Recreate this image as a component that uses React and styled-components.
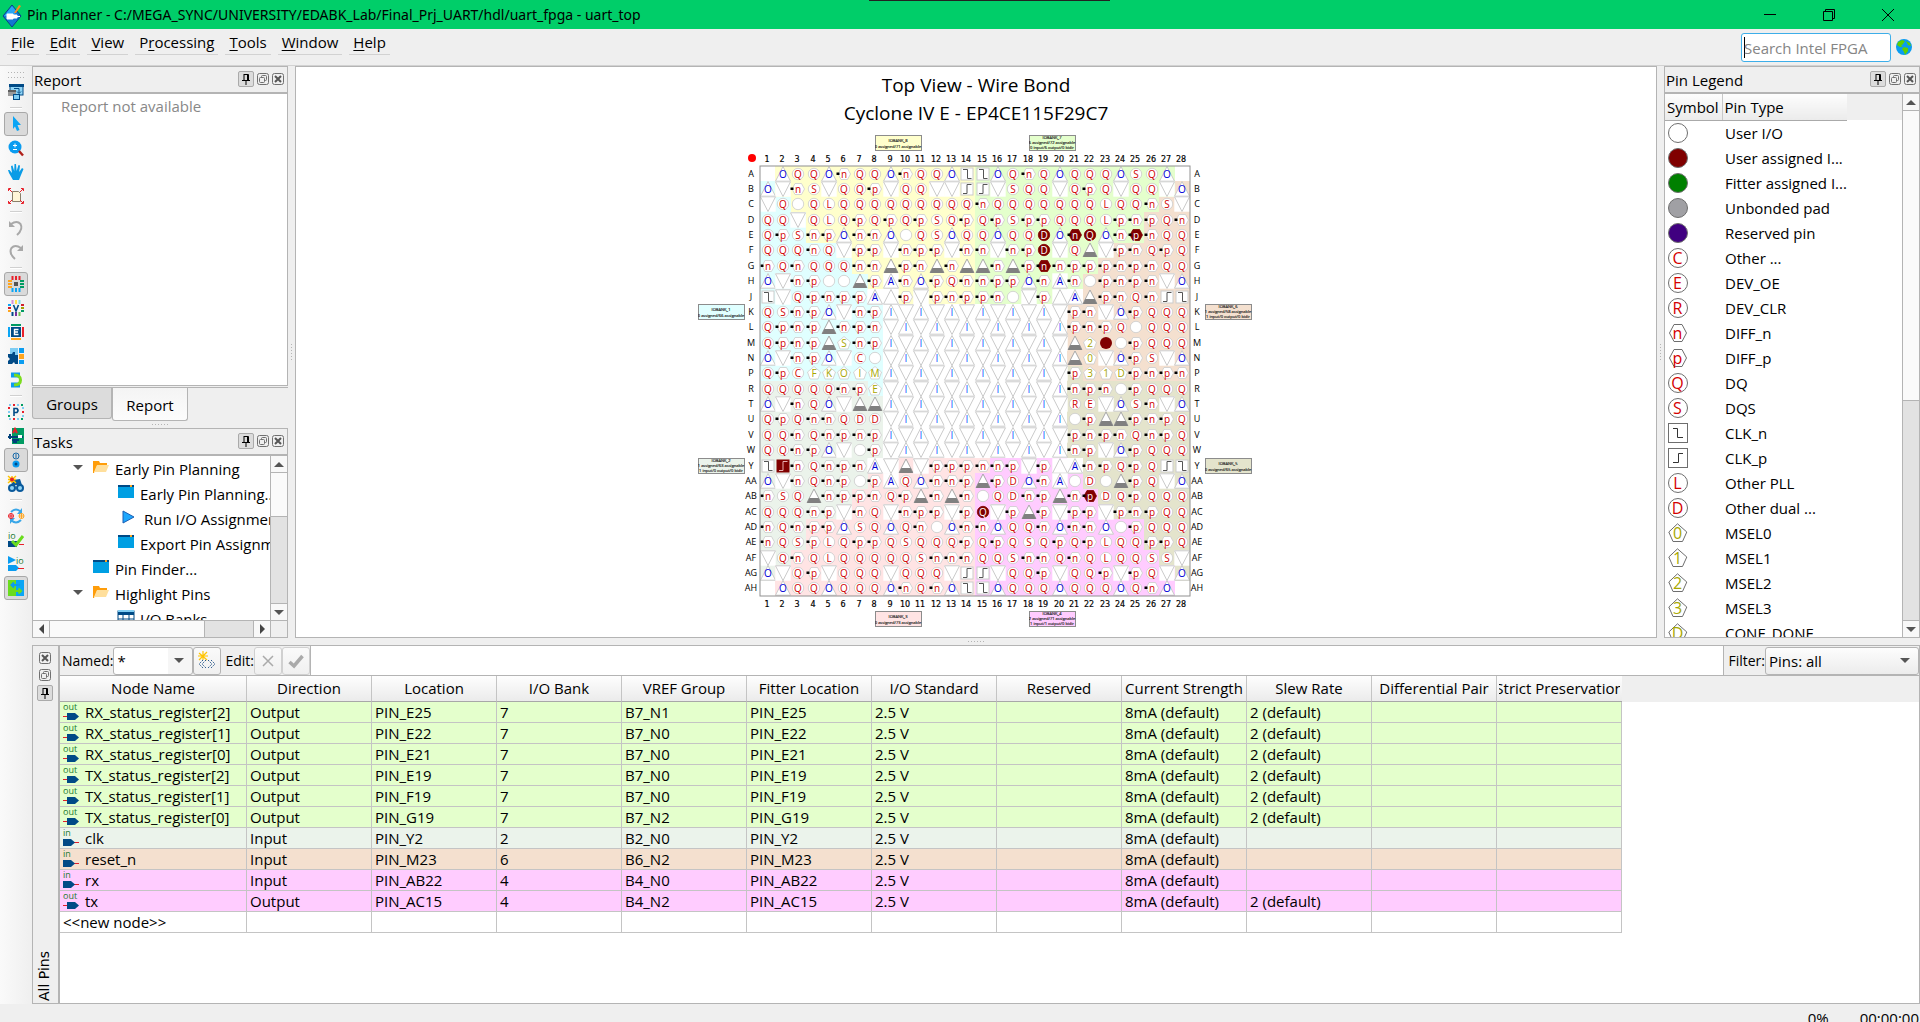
import React from "react";
import styled, { createGlobalStyle } from "styled-components";

const LINE = "#b4b4b4";
const CHROME = "#efefef";

const Global = createGlobalStyle`
  *, *::before, *::after { box-sizing: border-box; }
  body { margin: 0; overflow: hidden; }
  body, button, input, select, table {
    font-family: "Open Sans", "Noto Sans", sans-serif;
    font-size: 15px;
    line-height: 21px;
    color: #000;
  }
  ul { list-style: none; margin: 0; padding: 0; }
  button { padding: 0; border: 0; background: none; }
  svg { display: block; flex: none; }
`;

const Window = styled.div`
  display: flex;
  flex-direction: column;
  height: 100vh;
  background: ${CHROME};
  white-space: nowrap;
`;

/* ---------- title bar ---------- */
const TitleBar = styled.header`
  position: relative;
  display: flex;
  align-items: center;
  height: 29px;
  flex: none;
  padding-left: 2px;
  background: #00ce69;
`;
const TopEdge = styled.div`
  position: absolute;
  top: 0;
  left: 869px;
  width: 241px;
  height: 1px;
  background: #222;
`;
const WindowTitle = styled.h1`
  margin: 0 0 0 5px;
  flex: 1;
  font-family: "Noto Sans", sans-serif;
  font-size: 14px;
  font-weight: 400;
`;
const CaptionButton = styled.button`
  display: grid;
  place-items: center;
  width: 59px;
  height: 27px;
`;
const Captions = styled.div`
  display: flex;
  padding-right: 3px;
`;

/* ---------- menu bar ---------- */
const MenuBar = styled.nav`
  display: flex;
  justify-content: space-between;
  height: 37px;
  flex: none;
  padding: 4px 8px 0 7px;
  border-bottom: 1px solid #d2d2d2;
`;
const Menus = styled.div`
  display: flex;
  align-items: flex-start;
  gap: 7px;
`;
const MenuItem = styled.button`
  height: 22px;
  padding: 0 4px 3px;
  border-bottom: 1px solid #d2d2d2;
  line-height: 18px;
`;
const Key = styled.u`
  text-underline-offset: 2px;
`;
const SearchArea = styled.form`
  display: flex;
  align-items: flex-start;
  gap: 5px;
`;
const SearchBox = styled.input`
  width: 150px;
  height: 29px;
  padding: 1px 2px 0;
  border: 1px solid #3daee9;
  border-radius: 3px;
  background: linear-gradient(#000, #000) 2px 3px / 1px 21px no-repeat #fff;
  outline: none;
  &::placeholder { color: #858585; }
`;
const GlobeButton = styled.button`
  padding-top: 6px;
`;

/* ---------- workspace ---------- */
const Workspace = styled.div`
  display: flex;
  flex: 1;
  min-height: 0;
`;
const ToolStrip = styled.aside`
  width: 32px;
  flex: none;
  padding: 6px 4px 0;
  background: linear-gradient(90deg, #fafafa, #efefef);
`;
const dots = "linear-gradient(90deg, #b4b4b4 1px, transparent 1px)";
const Grip = styled.div`
  width: ${(p) => (p.$vertical ? 1 : 17)}px;
  height: ${(p) => (p.$vertical ? 17 : 1)}px;
  flex: none;
  background: ${(p) => (p.$vertical ? dots.replace("90deg", "180deg") : dots)} 0 0 / 3px 3px;
`;
const StripGrip = styled.div`
  display: grid;
  gap: 2px;
  justify-content: center;
  height: 8px;
`;
const ToolButton = styled.button`
  display: grid;
  place-items: center;
  width: 24px;
  height: 24px;
  border: 1px solid ${(p) => (p.$on ? "#a8a8a8" : "transparent")};
  border-radius: 3px;
  background: ${(p) => (p.$on ? "#dadada" : "none")};
`;
const ToolRule = styled.hr`
  width: 12px;
  height: 2px;
  margin: 3px auto;
  border: 0;
  border-top: 1px solid #d0d0d0;
  background: #fff;
`;
const Main = styled.main`
  display: flex;
  flex-direction: column;
  flex: 1;
  min-width: 0;
`;
const UpperRow = styled.div`
  display: flex;
  flex: 1;
  min-height: 0;
`;
const Divider = styled.div`
  display: grid;
  place-items: center;
  flex: none;
  width: ${(p) => (p.$vertical ? "7px" : "auto")};
  height: ${(p) => (p.$vertical ? "auto" : "7px")};
`;

/* ---------- docks ---------- */
const Column = styled.div`
  display: flex;
  flex-direction: column;
  width: 256px;
  flex: none;
`;
const Dock = styled.section`
  display: flex;
  flex-direction: column;
  flex: ${(p) => (p.$height ? `0 0 ${p.$height}px` : "1")};
  min-height: 0;
  border: 1px solid ${LINE};
`;
const DockHeader = styled.header`
  display: flex;
  align-items: center;
  height: 27px;
  flex: none;
  padding: 0 3px 0 1px;
  border-bottom: 2px solid ${LINE};
`;
const DockTitle = styled.h2`
  flex: 1;
  margin: 0;
  padding-top: 2px;
  font-size: 15px;
  font-weight: 400;
`;
const DockButtons = styled.div`
  display: flex;
  flex-direction: ${(p) => (p.$stacked ? "column" : "row")};
  align-items: center;
  gap: ${(p) => (p.$stacked ? 4 : 2)}px;
  padding-bottom: ${(p) => (p.$stacked ? 0 : 1)}px;
`;
const PinButton = styled.button`
  display: grid;
  place-items: center;
  width: 16px;
  height: 16px;
  border: 1px solid #aaa;
  border-radius: 2px;
  background: #dcdcdc;
`;
const SmallButton = styled.button`
  display: grid;
  place-items: center;
  width: 13px;
  height: 13px;
`;
const ReportBody = styled.div`
  flex: 1;
  padding: 2px 0 0 28px;
  background: #fff;
  color: #888;
`;
const Tabs = styled.div`
  display: flex;
  align-items: flex-start;
  height: 34px;
  flex: none;
  margin-top: 1px;
  border-top: 1px solid ${LINE};
`;
const Tab = styled.button`
  width: ${(p) => (p.$active ? 76 : 80)}px;
  height: ${(p) => (p.$active ? 33 : 31)}px;
  padding-top: ${(p) => (p.$active ? 3 : 2)}px;
  border: 1px solid ${LINE};
  border-top: 0;
  border-radius: 0 0 3px 3px;
  background: ${(p) => (p.$active ? "linear-gradient(#f4f4f4, #fcfcfc)" : "#dcdcdc")};
`;

/* ---------- scroll bars ---------- */
const ScrollView = styled.div`
  display: flex;
  flex: 1;
  min-height: 0;
  background: #fff;
`;
const ScrollContent = styled.div`
  flex: 1;
  min-width: 0;
  overflow: hidden;
`;
const ScrollTrack = styled.div`
  display: flex;
  flex-direction: ${(p) => (p.$horizontal ? "row" : "column")};
  flex: ${(p) => (p.$horizontal ? "1" : "none")};
  width: ${(p) => (p.$horizontal ? "auto" : "17px")};
  height: ${(p) => (p.$horizontal ? "17px" : "auto")};
  background: #e2e2e2;
  border: 0 solid ${LINE};
  border-width: ${(p) => (p.$horizontal ? "1px 0 0" : "0 0 0 1px")};
`;
const ScrollArrow = styled.button`
  display: grid;
  place-items: center;
  width: 16px;
  height: 16px;
  background: #f8f8f8;
`;
const ScrollThumb = styled.div`
  flex: 0 0 ${(p) => p.$size}px;
  margin-${(p) => (p.$horizontal ? "right" : "bottom")}: auto;
  border: 0 solid ${LINE};
  border-width: ${(p) => (p.$horizontal ? "0 1px" : "1px 0")};
  background: #fafafa;
`;
const ScrollEnd = styled.div`
  border: 0 solid ${LINE};
  border-width: ${(p) => (p.$horizontal ? "0 0 0 1px" : "1px 0 0")};
`;
const ScrollFoot = styled.div`
  display: flex;
  flex: none;
`;
const ScrollCorner = styled.div`
  width: 17px;
  height: 17px;
  border: 1px solid ${LINE};
  border-width: 1px 0 0 1px;
`;

/* ---------- tasks tree ---------- */
const TreeRow = styled.li`
  display: flex;
  align-items: center;
  height: 25px;
  padding-top: 1px;
  padding-left: ${(p) => p.$indent}px;
  gap: 6px;
`;
const TreeIcon = styled.span`
  display: grid;
  place-items: center;
  width: 16px;
  flex: none;
  padding-bottom: 4px;
`;
const TreeToggle = styled.button`
  width: 14px;
  padding-bottom: 4px;
`;

/* ---------- package view ---------- */
const PackagePanel = styled.section`
  display: flex;
  flex-direction: column;
  align-items: center;
  flex: 1;
  min-width: 0;
  overflow: hidden;
  padding-top: 4px;
  border: 1px solid ${LINE};
  background: #fff;
`;
const PackageTitle = styled.h2`
  margin: 0;
  font-size: 19px;
  line-height: 28px;
  font-weight: 400;
`;
const PackageDrawing = styled.svg`
  margin-top: 3px;
  text-anchor: middle;
  font-family: "Open Sans", sans-serif;
`;

/* ---------- legend ---------- */
const LegendTable = styled.table`
  width: 100%;
  table-layout: fixed;
  border-collapse: collapse;
  th {
    height: 26px;
    padding: 2px 0 0 2px;
    border-bottom: 1px solid #aaa;
    border-right: 1px solid #c8c8c8;
    background: linear-gradient(#fdfdfd, #ebebeb);
    font-weight: 400;
    text-align: left;
  }
  th + th { border-right: 0; padding-left: 2px; }
  th:last-child { border: 0; background: ${CHROME}; }
  td { height: 25px; padding: 1px 0 0 3px; overflow: hidden; }
  td:first-child { padding: 0 0 0 3px; }
`;
const LegendCol = styled.col`
  width: ${(p) => p.$width}px;
`;

/* ---------- all pins dock ---------- */
const PinsDock = styled.section`
  display: flex;
  flex: 0 0 359px;
  border: 1px solid ${LINE};
`;
const PinsSide = styled.header`
  display: flex;
  flex-direction: column;
  align-items: center;
  justify-content: space-between;
  width: 27px;
  flex: none;
  padding: 5px 2px 2px 0;
  border-right: 2px solid ${LINE};
`;
const SideTitle = styled.h2`
  margin: 0;
  font-family: "DejaVu Sans", sans-serif;
  font-size: 14px;
  font-weight: 400;
  writing-mode: vertical-rl;
  transform: rotate(180deg);
`;
const PinsMain = styled.div`
  display: flex;
  flex-direction: column;
  flex: 1;
  min-width: 0;
`;
const EditBar = styled.div`
  display: flex;
  align-items: center;
  height: 30px;
  flex: none;
  padding-left: 2px;
  border-bottom: 1px solid ${LINE};
`;
const FieldLabel = styled.label`
  padding-left: ${(p) => (p.$spaced ? 4 : 0)}px;
  font-size: 14px;
`;
const Combo = styled.span`
  display: grid;
  align-items: center;
  width: ${(p) => p.$width}px;
  > * { grid-area: 1 / 1; }
  > svg { justify-self: end; margin-right: 9px; pointer-events: none; }
`;
const Select = styled.select`
  appearance: none;
  width: 100%;
  height: 28px;
  padding: 1px 3px 0;
  border: 1px solid ${LINE};
  border-radius: 3px;
  background: ${(p) => (p.$editable ? "linear-gradient(90deg, #fff 54px, #f6f6f6 54px)" : "linear-gradient(#fdfdfd, #ececec)")};
`;
const EditButton = styled.button`
  display: grid;
  place-items: center;
  width: 28px;
  height: 28px;
  border: 1px solid ${(p) => (p.disabled ? "#d0d0d0" : LINE)};
  border-radius: 3px;
  background: linear-gradient(#fafafa, #f0f0f0);
`;
const EditField = styled.input`
  flex: 1;
  min-width: 0;
  height: 29px;
  border: 1px solid ${LINE};
  border-width: 0 1px;
  background: #fff;
  outline: none;
`;
const GridArea = styled.div`
  flex: 1;
  min-height: 0;
  overflow: hidden;
  background: linear-gradient(${CHROME} 26px, #fff 26px);
`;
const PinTable = styled.table`
  table-layout: fixed;
  width: 1562px;
  border-collapse: separate;
  border-spacing: 0;
`;
const HeadCell = styled.th`
  width: ${(p) => p.$width}px;
  height: 26px;
  padding: 0 2px;
  border-right: 1px solid #c4c4c4;
  border-bottom: 1px solid #a8a8a8;
  background: linear-gradient(#fefefe, #ebebeb);
  font-weight: 400;
  &:last-child { border-right: 0; }
`;
const HeadText = styled.span`
  display: flex;
  justify-content: center;
  overflow: hidden;
`;
const PinRow = styled.tr`
  background: ${(p) => p.$color};
`;
const Cell = styled.td`
  height: 21px;
  padding: 0 0 0 3px;
  border-right: 1px solid #c4c4c4;
  border-bottom: 1px solid #c4c4c4;
  line-height: 20px;
`;
const NodeName = styled.span`
  display: flex;
  align-items: center;
  gap: 6px;
`;
const StatusBar = styled.footer`
  display: flex;
  justify-content: flex-end;
  gap: 31px;
  height: 18px;
  flex: none;
  padding: 4px 1px 0 0;
  overflow: hidden;
`;

/* ---------- icons ---------- */
const Glyph = ({ w = 16, h = 16, children, ...rest }) => (
  <svg width={w} height={h} viewBox={`0 0 ${w} ${h}`} fill="none" overflow="visible" aria-hidden="true" {...rest}>{children}</svg>
);
const Arrow = ({ dir }) => {
  const d = { up: "M0 6L5 1L10 6Z", down: "M0 1L5 6L10 1Z" }[dir];
  if (d) return <Glyph w={10} h={7}><path d={d} fill="#555" /></Glyph>;
  return <Glyph w={7} h={10}><path d={dir === "left" ? "M6 0L1 5L6 10Z" : "M1 0L6 5L1 10Z"} fill="#444" /></Glyph>;
};
const PinGlyph = () => (
  <Glyph w={10} h={12}><path d="M3 1.5H7.5V7M3 1V7M1 7.5H9M5 8V12" stroke="#000" /><path d="M6 2H7.5V7H6Z" fill="#000" /></Glyph>
);
const FloatGlyph = () => (
  <Glyph w={12} h={12} stroke="#707070"><rect x=".5" y=".5" width="11" height="11" rx="2" /><rect x="4.5" y="2.5" width="5" height="5" rx="1" /><rect x="2.5" y="4.5" width="5" height="5" rx="1" fill={CHROME} /></Glyph>
);
const CloseGlyph = () => (
  <Glyph w={12} h={12} stroke="#707070"><rect x=".5" y=".5" width="11" height="11" rx="2" /><path d="M3 3L9 9M9 3L3 9" stroke="#555" strokeWidth="2" /></Glyph>
);
const Folder = () => (
  <Glyph><path d="M0 2H6L7 4H14V7H4L1 14H0Z" fill="#ff9d0a" /><path d="M4 6H16L13 13H1Z" fill="#ffdf9c" /></Glyph>
);
const WindowGlyph = () => (
  <Glyph><rect y="1" width="16" height="13" fill="#009fe3" /><rect y="1" width="16" height="2" fill="#004a86" /><rect x="12" y="1" width="2" height="2" fill="#ffa51e" /></Glyph>
);
const RunGlyph = () => (
  <Glyph><path d="M1 2L12 8L1 14Z" fill="#1ea7fd" stroke="#1a5fb4" /></Glyph>
);
const BanksGlyph = () => (
  <Glyph><rect y="2" width="16" height="14" fill="#fff" stroke="#004a86" /><rect y="1" width="16" height="2" fill="#7fcdf3" /><rect y="3" width="16" height="3" fill="#004a86" /><path d="M5 6V16M11 6V16M0 10H16" stroke="#004a86" /></Glyph>
);
const OutGlyph = () => (
  <Glyph h={18}><text x="0" y="7" fontSize="9" fill="#1a7a2e">out</text><path d="M0 13.5H5" stroke="#e0202a" /><path d="M4 10H12L16 13.5L12 17H4Z" fill="#004a86" /></Glyph>
);
const InGlyph = () => (
  <Glyph h={18}><text x="0" y="7" fontSize="9" fill="#1a7a2e">in</text><path d="M11 13.5H16" stroke="#e0202a" /><path d="M0 10H8L12 13.5L8 17H0Z" fill="#004a86" /></Glyph>
);
const AppLogo = () => (
  <Glyph w={20} h={26}><path d="M10 3L19 14L10 25L1 14Z" fill="#1276d2" stroke="#0a3f8a" /><path d="M10 4L15 10L10 14L2 14Z" fill="#27a6f5" /><path d="M5 12H11V17H5ZM11 13H15V16H11ZM15 14.5H18" fill="#fff" stroke="#fff" /><path d="M12 11L17 3L19 4L14 11Z" fill="#ff8a1e" /></Glyph>
);
const Globe = () => (
  <Glyph><circle cx="8" cy="8" r="8" fill="#0a9cf0" /><path d="M2 3L6 1L9 2L7 5L5 7L7 8L4 8L1 6ZM8 8L12 9L12 12L9 16L8 13L6 10ZM10 2L14 4L15 7L12 6Z" fill="#5fd000" /></Glyph>
);

const toolGroups = [
  [["Detach window", false, <><rect x="2" y="1" width="13" height="10" fill="#8fd4f5" stroke="#004a86" /><path d="M1 1.5H16" stroke="#004a86" strokeWidth="3" /><rect x="0" y="6" width="8" height="6" fill="#9a9a9a" /><rect y="6" width="8" height="2" fill="#5f5f5f" /><path d="M6 4.5H11V9M9 7.5L11 9.5L13 7.5" stroke="#004a86" /><rect x="5.5" y="10.5" width="6" height="5" fill="#7fcdf3" stroke="#004a86" /></>]],
  [
    ["Select", true, <path d="M5 0L13 9H9.5L11.5 14L9 15L7 10.5L5 13Z" fill="#0aa5f5" />],
    ["Zoom", false, <><circle cx="7" cy="7" r="6.5" fill="#0a9cf0" /><path d="M5 5.5H9M7 3.5V7.5M5 9.5H9" stroke="#fff" /><path d="M11 11L15 15.5" stroke="#b0201a" strokeWidth="2.4" /></>],
    ["Pan", false, <path d="M5 16L1 9L0 6L1.5 6L4 9L3 2L4.5 1.5L6.2 7L6.5 0H8L8.6 7L10.5 1L12 1.5L11.2 8L14 4L15.5 5L13 11L11 16Z" fill="#0a9ce6" />],
    ["Fit in window", false, <><path d="M4.5 3.5H10.5L12.5 5.5V13.5H4.5Z" fill="#fff6d8" stroke="#8a7f6a" /><path d="M.5 3V.5H3M13 .5H15.5V3M15.5 13V15.5H13M3 15.5H.5V13M1 1L4 4M15 1L12 4M15 15L12 12M1 15L4 12" stroke="#e8202a" /></>],
  ],
  [
    ["Undo", false, <><path d="M3 4Q9 0 12.5 4Q15.5 9 9 15" stroke="#a8a8a8" strokeWidth="2" /><path d="M1 1V7H7Z" fill="#a8a8a8" /></>],
    ["Redo", false, <><path d="M13 4Q7 0 3.5 4Q.5 9 7 15" stroke="#a8a8a8" strokeWidth="2" /><path d="M15 1V7H9Z" fill="#a8a8a8" /></>],
  ],
  [
    ["Show I/O banks", true, <><path d="M4.5 0V4M8 0V4M11.5 0V4" stroke="#e8202a" strokeWidth="2" /><path d="M4.5 12V16M8 12V16M11.5 12V16" stroke="#0aa5f5" strokeWidth="2" /><path d="M0 5H4M0 8H4M0 11H4" stroke="#ffa51e" strokeWidth="2" /><path d="M12 5H16M12 8H16M12 11H16" stroke="#009b62" strokeWidth="2" /><rect x="6" y="6" width="4" height="4" fill="#555" /></>],
    ["Show VREF groups", false, <><path d="M4.5 0V4" stroke="#d58fd8" strokeWidth="2" /><path d="M8 0V4" stroke="#ffe14a" strokeWidth="2" /><path d="M11.5 0V4" stroke="#7fdde8" strokeWidth="2" /><path d="M4.5 12V16" stroke="#004a86" strokeWidth="2" /><path d="M8 12V16" stroke="#7b2f9b" strokeWidth="2" /><path d="M11.5 12V16" stroke="#6cc24a" strokeWidth="2" /><path d="M0 5H3" stroke="#0aa5f5" strokeWidth="2" /><path d="M0 8H3M13 5H16" stroke="#d01f2a" strokeWidth="2" /><path d="M0 11H3" stroke="#ffa51e" strokeWidth="2" /><path d="M13 8H16" stroke="#a0a000" strokeWidth="2" /><path d="M13 11H16" stroke="#009b62" strokeWidth="2" /><path d="M5.5 5L8 11L10.5 5" stroke="#004a86" strokeWidth="1.6" /></>],
    ["Show edges", false, <><rect x="3" y="3" width="10" height="10" fill="#004a86" /><path d="M10.5 5.5H6.5V10.5H10.5M6.5 8H10" stroke="#fff" strokeWidth="1.4" /><path d="M3 1H13" stroke="#009b62" strokeWidth="2" /><path d="M3 15H13" stroke="#ffa51e" strokeWidth="2" /><path d="M1 3V13" stroke="#0aa5f5" strokeWidth="2" /><path d="M15 3V13" stroke="#e8202a" strokeWidth="2" /></>],
    ["Show DQ pins", false, <><path d="M2 0H10V8H2Z" fill="#7fcdf3" /><path d="M0 6H4L5 4H7V7H10V16H7L6 14L4 16H0V13L2 11L0 9Z" fill="#004a86" /><rect x="11" y="0" width="5" height="5" fill="#0a9cf0" /><rect x="11" y="6" width="5" height="5" fill="#ffa51e" /><rect x="11" y="12" width="5" height="4" fill="#0a9cf0" /></>],
    ["Show differential pairs", false, <><path d="M3 3H12M3 13H12" stroke="#0a9cf0" strokeWidth="5" /><path d="M6 3Q12.5 3 12.5 8Q12.5 13 6 13" stroke="#7bdc1e" strokeWidth="3" /></>],
  ],
  [
    ["Show package pins", false, <><rect x="1" y="1" width="14" height="14" stroke="#e8202a" strokeWidth="2" strokeDasharray="2 2" /><rect x="1" y="1" width="14" height="14" stroke="#7fcdf3" strokeWidth="2" strokeDasharray="2 6" /><rect x="1" y="1" width="14" height="14" stroke="#009b62" strokeWidth="2" strokeDasharray="2 14" strokeDashoffset="4" /><path d="M6 12V4.5H9Q11 6.5 9 8.5H6" stroke="#004a86" strokeWidth="1.6" /></>],
    ["Board view", false, <><rect x="4" width="12" height="16" fill="#009b62" /><path d="M5 5L7 1L9 5" stroke="#e8202a" strokeWidth="2" /><path d="M0 9H15M2 6V11M4 12H11M5 14H9" stroke="#00407a" strokeWidth="2" /><rect x="10" y="7" width="4" height="3" fill="#fff" /></>],
    ["Pin info", true, <><circle cx="8" cy="4" r="3" stroke="#1a6aa8" /><path d="M8 2V6" stroke="#1a6aa8" /><circle cx="8" cy="12" r="3.5" fill="#0a9cf0" /><circle cx="8" cy="12" r="1.5" fill="#004a86" /></>],
    ["Find pins", false, <><path d="M5 4L12 3L14 9H3Z" fill="#0a5a9c" /><circle cx="4" cy="12" r="4" fill="#0a5a9c" /><circle cx="12" cy="12" r="4" fill="#0a5a9c" /><circle cx="4" cy="12" r="2" fill="#8fd4f5" /><circle cx="12" cy="12" r="2" fill="#8fd4f5" /><path d="M0 0L8 7M8 0L0 7M4 0V7M0 3.5H8" stroke="#ffc400" strokeWidth="1.5" /><circle cx="4" cy="3.5" r="2" fill="#e8202a" /></>],
  ],
  [
    ["Swap pins", false, <><path d="M3 4Q8 -1 13 4M13 12Q8 17 3 12" stroke="#3aa7e8" strokeWidth="2" /><path d="M14 0V6H9ZM2 16V10H7Z" fill="#3aa7e8" /><circle cx="3" cy="8" r="2.5" stroke="#e8202a" /><path d="M3 5.5V10.5M.5 8H5.5" stroke="#e8202a" /><circle cx="13.5" cy="8" r="2.5" stroke="#ffa51e" /><path d="M13.5 5.5V10.5M11 8H16" stroke="#ffa51e" /></>],
    ["Check I/O", false, <><text x="0" y="7" fontSize="9" fill="#1a7a2e">io</text><path d="M0 9H9V15H0Z" fill="#004a86" /><path d="M11 12.5H16" stroke="#e8202a" /><path d="M4 9L8 13L15 4" stroke="#6adc1e" strokeWidth="3" /></>],
    ["Live I/O check", false, <><path d="M0 0L8 4L0 8Z" fill="#0a9cf0" /><path d="M0 9H8L11 12L8 15H0Z" fill="#0a9cf0" /><path d="M10 12.5H16" stroke="#e8202a" /><text x="8" y="8" fontSize="9" fill="#1a7a2e">io</text></>],
    ["Migration view", true, <><rect width="8" height="16" fill="#6adc1e" /><rect x="8" width="8" height="16" fill="#0aa5f5" /><path d="M12 5H4M6 2.5L3.5 5L6 7.5" stroke="#0a9cf0" strokeWidth="2" /><path d="M5 11H13M10.5 8.5L13 11L10.5 13.5" stroke="#6adc1e" strokeWidth="2" /></>],
  ],
];

/* ---------- pin map ---------- */
const CELL = 15.36;
const GX = 760;
const GY = 166;
const rowNames = "A B C D E F G H J K L M N P R T U V W Y AA AB AC AD AE AF AG AH".split(" ");

// o/v/u/i/a/g: power triangles, c: plain I/O, z/s: clock inputs,
// '*x' configuration pins, '!x' assigned pins.
const pinMap = `
- o Q Q o n Q Q o n Q Q o z z o Q n Q o Q Q Q o S Q o -
o v n S v Q Q p v Q Q v v s s v S Q Q v Q p Q v Q Q v o
v Q c Q L Q Q Q Q Q Q Q Q Q n Q Q Q Q Q Q Q L Q Q n S v
Q Q v Q L Q p Q p Q p S Q p Q p S p p Q Q Q L p n p Q n
Q p S n p o n n o c Q S o Q Q o Q Q !D o !n !Q o n !p n Q Q
Q Q Q n Q v p p v n p p v n n v n p !D v Q g v p n Q p Q
n Q n Q Q Q n n g p n g n g g n g p !n n p p p n p n Q Q
o v n p c c g p a n o p Q n n p p o n a n c p n p n v o
z v Q p n p p a u p v p n p p n c v p u a g p n Q n s z
Q S n p o v n p i v i v i v i v i v i v p n v o p Q Q Q
Q p n p g n p n v i v i v i v i v i v i p n p Q c Q Q Q
Q p n p g *S n p i v i v i v i v i v i v g *2 ! c p Q Q Q
o v n p o v C c v i v i v i v i v i v i g *0 v o p S v o
Q p C *F *K *O *I *M i v i v i v i v i v i v p *3 *1 *D p n p n
Q Q Q Q Q n p *E v i v i v i v i v i v i n p n c p Q Q Q
o v n Q o v g g i v i v i v i v i v i v R E v o S n v o
Q p Q n n Q D D v i v i v i v i v i v i c p g g p n p Q
Q Q n Q n p n p i v i v i v i v i v i v p n p n Q n p Q
Q Q n p o v c p v i v i v i v i v i v i n p v o p Q Q Q
z !s n Q n p n a v g v p p p n n p v p u a n p Q p Q s z
o v n Q n p c p a Q o n n p g p D o n a c D c g p Q v o
n S Q g n p p n Q p g n g n c Q D n p g n !p D Q p Q Q Q
Q Q Q n p v n Q v n p p v p !Q v p g p v p p v p n p Q Q
n Q n p p o S Q o Q n c o n n o Q Q n o n n o c p Q Q Q
n Q S p L Q p p Q S Q Q Q p Q p Q S Q p Q p L Q Q p p Q
v Q n Q L Q Q Q Q Q S n n n Q Q S n n Q n Q L Q Q S S v
o v Q p v Q Q Q v Q Q Q v s s v Q Q p v Q Q p v p Q v o
- o Q Q o Q Q Q o n Q n o z z o Q Q Q o Q Q Q o Q n o -`
  .trim().split("\n").map((r) => r.split(" "));

const bankColor = { 1: "#e0ffff", 2: "#ebf3eb", 3: "#ffe4e4", 4: "#ffccff", 5: "#e4e4cc", 6: "#f4e0cf", 7: "#e4ffcc", 8: "#ffffcc", 0: "#fff" };
// Runs of "bank x count" for each row.
const bankRuns = [
  "0:1 8:13 7:13 0:1", "1:1 8:13 7:13 6:1", "1:2 8:12 7:12 6:2", "1:3 8:11 7:11 6:3", "1:3 8:11 7:11 6:3",
  "1:5 8:9 7:9 6:5", "1:6 8:8 7:8 6:6", "1:7 8:7 7:7 6:7", "1:7 0:2 8:5 7:6 0:1 6:7",
  "1:8 0:12 6:8", "1:8 0:12 6:8", "1:8 0:12 6:8", "1:8 0:12 6:8", "1:8 0:12 5:1 6:7",
  "2:7 1:1 0:12 5:8", "2:8 0:12 5:8", "2:8 0:12 5:8", "2:8 0:12 5:8", "2:8 0:12 5:8",
  "2:7 0:2 3:6 4:5 0:1 5:7", "2:7 3:7 4:7 5:7", "2:6 3:8 4:8 5:6", "2:6 3:8 4:9 5:5", "2:3 3:11 4:11 5:3",
  "2:3 3:11 4:11 5:3", "2:2 3:12 4:12 5:2", "2:1 3:13 4:13 5:1", "0:1 3:13 4:13 0:1",
].map((line) => line.split(" ").map((run) => run.split(":").map(Number)));

const banks = [
  [8, 875, 135, ["0 assigned/71 assignable"]],
  [7, 1029, 135, ["6 assigned/72 assignable", "0 input/6 output/0 bidir"]],
  [1, 698, 304, ["0 assigned/66 assignable"]],
  [6, 1205, 304, ["1 assigned/58 assignable", "1 input/0 output/0 bidir"]],
  [2, 698, 458, ["1 assigned/63 assignable", "1 input/0 output/0 bidir"]],
  [5, 1205, 458, ["0 assigned/65 assignable"]],
  [3, 875, 611, ["0 assigned/73 assignable"]],
  [4, 1029, 611, ["2 assigned/71 assignable", "1 input/1 output/0 bidir"]],
];

const OUT = "#cbcbcb";
function Pin({ code, x, y }) {
  const t = `translate(${x} ${y})`;
  const letter = (ch, fill) => <text y="4" fontSize="10" fill={fill}>{ch}</text>;
  const white = <rect x="-7.7" y="-7.7" width="15.4" height="15.4" fill="#fff" />;
  const up = <path d="M0 -7.5L7.5 7.2H-7.5Z" fill="#fff" stroke={OUT} />;
  if (code === "-") return null;
  if (code === "!") return <circle cx={x} cy={y} r="6" fill="#800000" />;
  if (code[0] === "*")
    return <g transform={t}><path d="M0 -6.5L6.5 -1L4 6H-4L-6.5 -1Z" fill="#fff" stroke={OUT} strokeWidth=".8" />{letter(code[1], "#a6a600")}</g>;
  const set = code[0] === "!";
  const c = set ? code[1] : code;
  const fill = set ? "#800000" : "#fff";
  const edge = set ? "#800000" : OUT;
  switch (c) {
    case "o": return <g transform={t}>{up}{letter("O", "#0000d8")}</g>;
    case "i": return <g transform={t}>{up}{letter("I", "#1464ff")}</g>;
    case "a": return <g transform={t}>{white}{up}{letter("A", "#0000d8")}</g>;
    case "u": return <g transform={t}>{white}{up}</g>;
    case "v": return <g transform={t}>{white}<path d="M0 7.5L7.5 -7.2H-7.5Z" fill="#fff" stroke={OUT} /></g>;
    case "g": return <g transform={t}><path d="M0 -7L7 6.5H-7Z" fill="#fff" stroke="#a8a8a8" /><path d="M-4.7 2H4.7L7 7H-7Z" fill="#808080" /></g>;
    case "c": return <circle cx={x} cy={y} r="5.7" fill="#fff" stroke={OUT} strokeWidth=".8" />;
    case "z":
    case "s":
      return <g transform={t}><rect x="-6" y="-6" width="12" height="12" fill={fill} stroke={edge} /><path d={c === "z" ? "M-4 -4.5H.5V4.5H4.5" : "M-4 4.5H0V-4.5H4.5"} fill="none" stroke={set ? "#e8b0b0" : "#555"} /></g>;
    case "n":
    case "p":
      return <g transform={t}><path d="M-3 -5.5H3.5L6.5 0L3.5 5.5H-3L-6 0Z" fill={fill} stroke={edge} strokeWidth=".8" /><rect x="-7.5" y="-1.5" width="3" height="2.5" fill="#000" />{letter(c, set ? "#fff" : "#d00000")}</g>;
    default:
      return <g transform={t}><circle r="5.7" fill={fill} stroke={edge} strokeWidth=".8" />{letter(c, set ? "#fff" : "#d00000")}</g>;
  }
}

function PackageMap() {
  const mid = (i) => Math.round((i + 0.5) * CELL);
  return (
    <PackageDrawing width="572" height="500" viewBox="690 130 572 500" role="img" aria-label="Package pin map">
      {bankRuns.map((runs, r) => {
        let at = 0;
        return runs.map(([bank, count]) => {
          const start = at;
          at += count;
          return <rect key={`${r}-${start}`} shapeRendering="crispEdges" x={GX + start * CELL} y={GY + r * CELL} width={count * CELL} height={CELL} fill={bankColor[bank]} />;
        });
      })}
      {pinMap.map((row, r) => row.map((code, c) => <Pin key={`${r}-${c}`} code={code} x={GX + mid(c)} y={GY + mid(r)} />))}
      <rect x="760" y="166" width="430" height="430" fill="none" stroke="#909090" />
      <circle cx="752" cy="158" r="4" fill="#f00" />
      <g fontFamily="DejaVu Sans, sans-serif" fontSize="8" stroke="#000" strokeWidth=".2">
        {rowNames.map((_, i) => (
          <React.Fragment key={i}>
            <text x={GX + mid(i) - 1} y="162">{i + 1}</text>
            <text x={GX + mid(i) - 1} y="607">{i + 1}</text>
          </React.Fragment>
        ))}
      </g>
      <g fontSize="9">
        {rowNames.map((name, i) => (
          <React.Fragment key={name}>
            <text x="751" y={GY + mid(i) + 3}>{name}</text>
            <text x="1197" y={GY + mid(i) + 3}>{name}</text>
          </React.Fragment>
        ))}
      </g>
      {banks.map(([n, x, y, lines]) => (
        <svg key={n} x={x} y={y} width="48" height="17" fontSize="4" fill="#222" stroke="#222" strokeWidth=".15">
          <rect x=".5" y=".5" width="46" height="15" fill={bankColor[n]} stroke="#8c8c8c" strokeWidth="1" />
          <text x="23" y={lines.length > 1 ? 4 : 7}>IOBANK_{n}</text>
          {lines.map((line, i) => <text key={line} x="23" y={lines.length > 1 ? 9 + 5 * i : 13}>{line}</text>)}
        </svg>
      ))}
    </PackageDrawing>
  );
}

/* ---------- legend data ---------- */
const legend = [
  ["disc", "#fff", "User I/O"], ["disc", "#800000", "User assigned I..."], ["disc", "#008000", "Fitter assigned I..."],
  ["disc", "#a0a0a4", "Unbonded pad"], ["disc", "#400080", "Reserved pin"],
  ["circle", "C", "Other ..."], ["circle", "E", "DEV_OE"], ["circle", "R", "DEV_CLR"], ["hex", "n", "DIFF_n"], ["hex", "p", "DIFF_p"],
  ["circle", "Q", "DQ"], ["circle", "S", "DQS"], ["clk", "n", "CLK_n"], ["clk", "p", "CLK_p"], ["circle", "L", "Other PLL"], ["circle", "D", "Other dual ..."],
  ["penta", "0", "MSEL0"], ["penta", "1", "MSEL1"], ["penta", "2", "MSEL2"], ["penta", "3", "MSEL3"], ["penta", "D", "CONF_DONE"],
];
function LegendSymbol({ kind, value }) {
  const s = { stroke: "#6e6e6e", fill: "#fff" };
  return (
    <Glyph w={20} h={20} textAnchor="middle">
      {kind === "disc" && <circle cx="10" cy="10" r="9.5" {...s} fill={value} />}
      {kind === "circle" && <circle cx="10" cy="10" r="9.5" {...s} />}
      {kind === "hex" && <path d="M6 1.5H14L18.5 10L14 18.5H6L1.5 10Z" {...s} />}
      {kind === "penta" && <path d="M9.5 .8L18.8 9L14.5 18.5H5L.8 9Z" {...s} />}
      {kind === "clk" && <><rect x=".5" y=".5" width="19" height="19" {...s} /><path d={value === "n" ? "M5 5.5H9.5V14.5H15" : "M5 14.5H10.5V5.5H15"} stroke="#333" /></>}
      {kind !== "disc" && kind !== "clk" && <text x="9.5" y="16" fontSize="16" fill={kind === "penta" ? "#a8a800" : "#d40000"}>{value}</text>}
    </Glyph>
  );
}

/* ---------- table data ---------- */
const columns = ["Node Name", "Direction", "Location", "I/O Bank", "VREF Group", "Fitter Location", "I/O Standard", "Reserved", "Current Strength", "Slew Rate", "Differential Pair", "Strict Preservation"];
const nodes = [
  ["RX_status_register[2]", "Output", "E25", 7, "B7_N1"], ["RX_status_register[1]", "Output", "E22", 7, "B7_N0"],
  ["RX_status_register[0]", "Output", "E21", 7, "B7_N0"], ["TX_status_register[2]", "Output", "E19", 7, "B7_N0"],
  ["TX_status_register[1]", "Output", "F19", 7, "B7_N0"], ["TX_status_register[0]", "Output", "G19", 7, "B7_N2"],
  ["clk", "Input", "Y2", 2, "B2_N0"], ["reset_n", "Input", "M23", 6, "B6_N2"],
  ["rx", "Input", "AB22", 4, "B4_N0"], ["tx", "Output", "AC15", 4, "B4_N2"],
];
const menus = [["", "F", "ile"], ["", "E", "dit"], ["", "V", "iew"], ["P", "r", "ocessing"], ["", "T", "ools"], ["", "W", "indow"], ["", "H", "elp"]];

const HeaderButtons = ({ stacked }) => {
  const items = [
    <PinButton key="pin" aria-label="Pin"><PinGlyph /></PinButton>,
    <SmallButton key="float" aria-label="Float"><FloatGlyph /></SmallButton>,
    <SmallButton key="close" aria-label="Close"><CloseGlyph /></SmallButton>,
  ];
  return <DockButtons $stacked={stacked}>{stacked ? items.reverse() : items}</DockButtons>;
};

const Scroll = ({ horizontal, thumb }) => (
  <ScrollTrack $horizontal={horizontal}>
    <ScrollArrow aria-label="Scroll back"><Arrow dir={horizontal ? "left" : "up"} /></ScrollArrow>
    <ScrollThumb $size={thumb} $horizontal={horizontal} />
    <ScrollEnd $horizontal={horizontal}><ScrollArrow aria-label="Scroll forward"><Arrow dir={horizontal ? "right" : "down"} /></ScrollArrow></ScrollEnd>
  </ScrollTrack>
);

const TreeItem = ({ indent, icon, open, children }) => (
  <TreeRow $indent={indent}>
    {open && <TreeToggle aria-label="Collapse"><Arrow dir="down" /></TreeToggle>}
    <TreeIcon>{icon}</TreeIcon>
    {children}
  </TreeRow>
);

export default function App() {
  return (
    <Window>
      <Global />
      <TitleBar>
        <TopEdge />
        <AppLogo />
        <WindowTitle>Pin Planner - C:/MEGA_SYNC/UNIVERSITY/EDABK_Lab/Final_Prj_UART/hdl/uart_fpga - uart_top</WindowTitle>
        <Captions>
          <CaptionButton aria-label="Minimize"><Glyph w={12} h={12} stroke="#000"><path d="M0 5.5H12" /></Glyph></CaptionButton>
          <CaptionButton aria-label="Restore"><Glyph w={12} h={12} stroke="#000"><path d="M.5 2.5H9.5V11.5H.5ZM2.5 2V.5H11.5V9.5H10" /></Glyph></CaptionButton>
          <CaptionButton aria-label="Close"><Glyph w={12} h={12} stroke="#000"><path d="M0 0L12 12M12 0L0 12" /></Glyph></CaptionButton>
        </Captions>
      </TitleBar>
      <MenuBar>
        <Menus>
          {menus.map(([a, k, b]) => <MenuItem key={k}>{a}<Key>{k}</Key>{b}</MenuItem>)}
        </Menus>
        <SearchArea>
          <SearchBox placeholder="Search Intel FPGA" aria-label="Search Intel FPGA" />
          <GlobeButton type="button" aria-label="Search the web"><Globe /></GlobeButton>
        </SearchArea>
      </MenuBar>

      <Workspace>
        <ToolStrip>
          <StripGrip><Grip /><Grip /></StripGrip>
          {toolGroups.map((group, i) => (
            <React.Fragment key={i}>
              {i > 0 && <ToolRule />}
              {group.map(([label, on, art]) => <ToolButton key={label} $on={on} aria-label={label}><Glyph>{art}</Glyph></ToolButton>)}
            </React.Fragment>
          ))}
        </ToolStrip>

        <Main>
          <UpperRow>
            <Column>
              <Dock>
                <DockHeader><DockTitle>Report</DockTitle><HeaderButtons /></DockHeader>
                <ReportBody>Report not available</ReportBody>
              </Dock>
              <Tabs>
                <Tab>Groups</Tab>
                <Tab $active>Report</Tab>
              </Tabs>
              <Divider><Grip /></Divider>
              <Dock $height={210}>
                <DockHeader><DockTitle>Tasks</DockTitle><HeaderButtons /></DockHeader>
                <ScrollView>
                  <ScrollContent>
                    <ul>
                      <TreeItem indent={40} open icon={<Folder />}>Early Pin Planning</TreeItem>
                      <TreeItem indent={85} icon={<WindowGlyph />}>Early Pin Planning...</TreeItem>
                      <TreeItem indent={89} icon={<RunGlyph />}>Run I/O Assignment Analysis</TreeItem>
                      <TreeItem indent={85} icon={<WindowGlyph />}>Export Pin Assignments...</TreeItem>
                      <TreeItem indent={60} icon={<WindowGlyph />}>Pin Finder...</TreeItem>
                      <TreeItem indent={40} open icon={<Folder />}>Highlight Pins</TreeItem>
                      <TreeItem indent={85} icon={<BanksGlyph />}>I/O Banks</TreeItem>
                    </ul>
                  </ScrollContent>
                  <Scroll thumb={45} />
                </ScrollView>
                <ScrollFoot>
                  <Scroll horizontal thumb={156} />
                  <ScrollCorner />
                </ScrollFoot>
              </Dock>
            </Column>
            <Divider $vertical><Grip $vertical /></Divider>
            <PackagePanel>
              <PackageTitle>Top View - Wire Bond</PackageTitle>
              <PackageTitle>Cyclone IV E - EP4CE115F29C7</PackageTitle>
              <PackageMap />
            </PackagePanel>
            <Divider $vertical><Grip $vertical /></Divider>
            <Column>
              <Dock>
                <DockHeader><DockTitle>Pin Legend</DockTitle><HeaderButtons /></DockHeader>
                <ScrollView>
                  <ScrollContent>
                    <LegendTable>
                      <colgroup><LegendCol $width={57} /><LegendCol $width={125} /><col /></colgroup>
                      <thead><tr><th>Symbol</th><th>Pin Type</th><th aria-label="Spare" /></tr></thead>
                      <tbody>
                        {legend.map(([kind, value, label]) => (
                          <tr key={label}><td><LegendSymbol kind={kind} value={value} /></td><td colSpan={2}>{label}</td></tr>
                        ))}
                      </tbody>
                    </LegendTable>
                  </ScrollContent>
                  <Scroll thumb={291} />
                </ScrollView>
              </Dock>
            </Column>
          </UpperRow>
          <Divider><Grip /></Divider>
          <PinsDock>
            <PinsSide>
              <HeaderButtons stacked />
              <SideTitle>All Pins</SideTitle>
            </PinsSide>
            <PinsMain>
              <EditBar>
                <FieldLabel htmlFor="named">Named:</FieldLabel>
                <Combo $width={80}><Select id="named" $editable><option>*</option></Select><Arrow dir="down" /></Combo>
                <EditButton aria-label="Node finder">
                  <Glyph w={18} h={20}><path d="M1 2L9 9M9 1L1 9M5 0V9M0 5H10" stroke="#ffc400" strokeWidth="1.2" /><path d="M5 9L1 13L5 17M8 9L4 13L8 17M10 9L14 13L10 17M13 9L17 13L13 17" stroke="#2a5a8c" strokeDasharray="1.5 1" /></Glyph>
                </EditButton>
                <FieldLabel htmlFor="edit" $spaced>Edit:</FieldLabel>
                <EditButton disabled aria-label="Discard"><Glyph w={12} h={12}><path d="M1 1L11 11M11 1L1 11" stroke="#aaa" strokeWidth="1.5" /></Glyph></EditButton>
                <EditButton disabled aria-label="Accept"><Glyph><path d="M1.5 9L6 13L14.5 3" stroke="#aaa" strokeWidth="3.5" /></Glyph></EditButton>
                <EditField id="edit" />
                <FieldLabel htmlFor="filter" $spaced>Filter:</FieldLabel>
                <Combo $width={154}><Select id="filter"><option>Pins: all</option></Select><Arrow dir="down" /></Combo>
              </EditBar>
              <GridArea>
                <PinTable>
                  <thead>
                    <tr>{columns.map((c, i) => <HeadCell key={c} $width={i ? 125 : 187}><HeadText>{c}</HeadText></HeadCell>)}</tr>
                  </thead>
                  <tbody>
                    {nodes.map(([name, dir, loc, bank, vref]) => (
                      <PinRow key={name} $color={bankColor[bank]}>
                        <Cell><NodeName>{dir === "Output" ? <OutGlyph /> : <InGlyph />}{name}</NodeName></Cell>
                        <Cell>{dir}</Cell><Cell>PIN_{loc}</Cell><Cell>{bank}</Cell><Cell>{vref}</Cell><Cell>PIN_{loc}</Cell>
                        <Cell>2.5 V</Cell><Cell /><Cell>8mA (default)</Cell><Cell>{dir === "Output" ? "2 (default)" : ""}</Cell><Cell /><Cell />
                      </PinRow>
                    ))}
                    <PinRow $color="#fff">
                      <Cell>&lt;&lt;new node&gt;&gt;</Cell>
                      {columns.slice(1).map((c) => <Cell key={c} />)}
                    </PinRow>
                  </tbody>
                </PinTable>
              </GridArea>
            </PinsMain>
          </PinsDock>
        </Main>
      </Workspace>
      <StatusBar><span>0%</span><span>00:00:00</span></StatusBar>
    </Window>
  );
}
